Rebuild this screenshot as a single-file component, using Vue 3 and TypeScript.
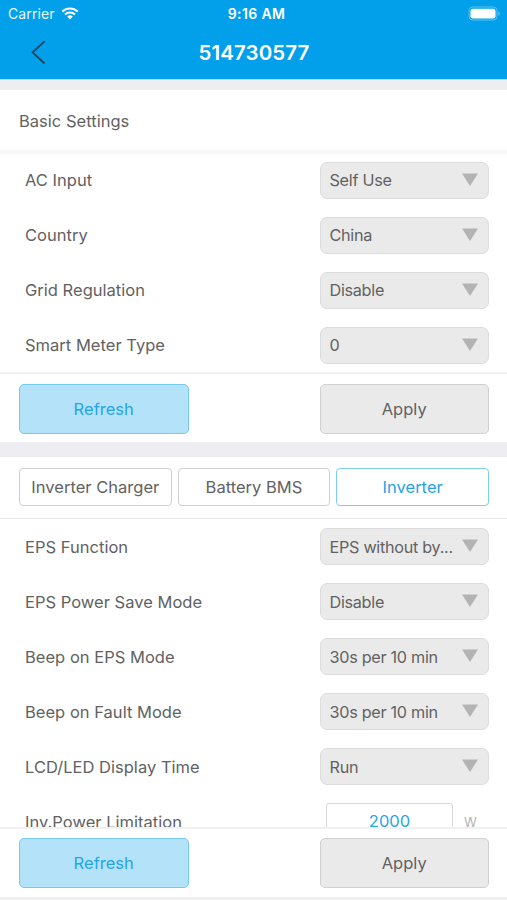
<script setup lang="ts">
import { ref } from 'vue'

interface Setting {
  label: string
  value: string
}

const basicSettings: Setting[] = [
  { label: 'AC Input', value: 'Self Use' },
  { label: 'Country', value: 'China' },
  { label: 'Grid Regulation', value: 'Disable' },
  { label: 'Smart Meter Type', value: '0' },
]

const inverterSettings: Setting[] = [
  { label: 'EPS Function', value: 'EPS without by...' },
  { label: 'EPS Power Save Mode', value: 'Disable' },
  { label: 'Beep on EPS Mode', value: '30s per 10 min' },
  { label: 'Beep on Fault Mode', value: '30s per 10 min' },
  { label: 'LCD/LED Display Time', value: 'Run' },
]

const tabs = ['Inverter Charger', 'Battery BMS', 'Inverter']
const activeTab = ref('Inverter')
const powerLimit = ref('2000')
</script>

<template>
  <main class="screen">
    <header class="header">
      <div class="status">
        <div class="carrier">
          <span>Carrier</span>
          <svg class="wifi" width="18" height="13" viewBox="0 0 18 13">
            <path d="M1.3 4.6a11 11 0 0 1 15.4 0" fill="none" stroke="#fff" stroke-width="2.1" />
            <path d="M4 7.5a7.2 7.2 0 0 1 10 0" fill="none" stroke="#fff" stroke-width="2.1" />
            <path d="M9 12.4 6.2 9.6a4 4 0 0 1 5.6 0z" fill="#fff" />
          </svg>
        </div>
        <span class="time">9:16 AM</span>
        <svg class="battery" width="33" height="15" viewBox="0 0 33 15">
          <rect x="1" y="1" width="28" height="13" rx="3.8" fill="none" stroke="#5cc1f2" stroke-width="1" />
          <rect x="2.5" y="2.7" width="25" height="9.8" rx="2.2" fill="#fff" />
          <path d="M30.3 5.2v4.6a2.5 2.5 0 0 0 0-4.6z" fill="#5cc1f2" />
        </svg>
      </div>
      <div class="navbar">
        <button class="back" aria-label="Back">
          <svg width="15" height="25" viewBox="0 0 15 25">
            <path d="M13.5 1.3 1.6 12.3l11.9 11.2" fill="none" stroke="#17455c" stroke-width="1.8" />
          </svg>
        </button>
        <h1>514730577</h1>
      </div>
    </header>

    <section class="basic">
      <h2>Basic Settings</h2>
      <div class="rows">
        <div v-for="s in basicSettings" :key="s.label" class="row">
          <span class="label">{{ s.label }}</span>
          <button class="select">
            <span>{{ s.value }}</span>
            <svg width="16" height="13" viewBox="0 0 16 13"><path d="M0 0.5h16L8 13z" fill="#b3b3b3" /></svg>
          </button>
        </div>
      </div>
      <div class="actions">
        <button class="btn refresh">Refresh</button>
        <button class="btn">Apply</button>
      </div>
    </section>

    <section class="device">
      <nav class="tabs">
        <button
          v-for="t in tabs"
          :key="t"
          class="tab"
          :class="{ active: t === activeTab }"
          @click="activeTab = t"
        >{{ t }}</button>
      </nav>
      <div class="rows scroll">
        <div v-for="s in inverterSettings" :key="s.label" class="row">
          <span class="label">{{ s.label }}</span>
          <button class="select">
            <span>{{ s.value }}</span>
            <svg width="16" height="13" viewBox="0 0 16 13"><path d="M0 0.5h16L8 13z" fill="#b3b3b3" /></svg>
          </button>
        </div>
        <div class="row">
          <span class="label">Inv.Power Limitation</span>
          <div class="limit">
            <input v-model="powerLimit" aria-label="Inv.Power Limitation" />
            <span class="unit">W</span>
          </div>
        </div>
      </div>
      <div class="actions bottom">
        <button class="btn refresh">Refresh</button>
        <button class="btn">Apply</button>
      </div>
    </section>
  </main>
</template>

<style>
body {
  margin: 0;
  overflow: hidden;
}
</style>

<style scoped>
.screen {
  display: flex;
  flex-direction: column;
  width: 507px;
  height: 900px;
  overflow: hidden;
  background: #eeedf2;
  color: #626262;
  font-family: Inter, 'Liberation Sans', sans-serif;
  font-size: 16.5px;
  letter-spacing: 0.02px;
}
.screen * {
  box-sizing: border-box;
}
button,
input {
  margin: 0;
  padding: 0;
  font: inherit;
  letter-spacing: inherit;
  color: inherit;
  border: 0;
  background: none;
}
.header {
  height: 80px;
  flex: none;
  background: #02a0ea;
  border-bottom: 1px solid #a5e2f9;
  color: #fff;
}
.status {
  display: grid;
  grid-template-columns: 1fr auto 1fr;
  align-items: center;
  height: 27px;
  padding: 0 5px 0 8px;
  font-size: 14px;
  letter-spacing: 0.1px;
}
.carrier {
  display: flex;
  align-items: center;
  gap: 6px;
  color: #e6f7ff;
}
.time {
  font-weight: 600;
  font-size: 14px;
  letter-spacing: 0.35px;
  padding-left: 3px;
}
.battery {
  justify-self: end;
  margin-right: 1px;
}
.navbar {
  display: grid;
  grid-template-columns: 60px 1fr 60px;
  align-items: center;
  height: 50px;
}
.back {
  display: flex;
  padding-left: 31px;
}
h1 {
  margin: 0;
  padding: 0 0 0 1px;
  text-align: center;
  font-size: 20.5px;
  font-weight: 600;
  letter-spacing: 0.1px;
}
.basic {
  flex: none;
  height: 352px;
  margin-top: 10px;
  background: #fff;
}
h2 {
  display: flex;
  align-items: center;
  height: 64px;
  margin: 0;
  padding: 2px 19px 0;
  border-bottom: 4px solid #f8f8f8;
  font-size: 16.5px;
  font-weight: 400;
}
.rows {
  padding: 0 18px 0 25px;
}
.basic .rows {
  height: 218px;
  overflow: hidden;
}
.row {
  display: flex;
  align-items: center;
  justify-content: space-between;
  height: 55px;
}
.basic .row:first-child {
  height: 54px;
  padding-bottom: 1px;
}
.basic .label,
.basic .select span {
  padding-bottom: 2px;
}
.select {
  display: flex;
  align-items: center;
  justify-content: space-between;
  width: 169.5px;
  height: 37px;
  padding: 0 10.5px 0 9px;
  border: 1px solid #dcdcdc;
  border-radius: 7px;
  background: #eaeaea;
  font-size: 16.2px;
  letter-spacing: -0.28px;
}
.select svg {
  margin-bottom: 3px;
}
.actions {
  display: flex;
  justify-content: space-between;
  padding: 10px 18px 0 19px;
  border-top: 2px solid #f1f1f3;
}
.btn {
  width: 169.5px;
  height: 49.5px;
  border: 1px solid #cfcfcf;
  border-radius: 5px;
  background: #eaeaea;
}
.btn.refresh {
  border-color: #76c9ef;
  background: #b3e2f9;
  color: #24a5e8;
}
.device {
  display: flex;
  flex: 1;
  flex-direction: column;
  min-height: 0;
  margin-top: 15px;
  border-bottom: 3px solid #f0f0f0;
  background: #fff;
}
.tabs {
  display: grid;
  grid-template-columns: repeat(3, 1fr);
  gap: 6px;
  flex: none;
  height: 62px;
  padding: 11px 18px 12px 19px;
  border-bottom: 1px solid #ececee;
}
.tab {
  border: 1px solid #cfcfcf;
  border-radius: 4px;
  white-space: nowrap;
}
.tab.active {
  border-color: #7bcef2;
  color: #1fa2e6;
}
.scroll {
  flex: 1;
  min-height: 0;
  overflow: hidden;
}
.limit {
  display: flex;
  align-items: center;
  width: 163px;
}
.limit input {
  width: 127px;
  height: 37px;
  margin-right: 11px;
  padding-bottom: 2px;
  border: 1px solid #d8d8d8;
  border-radius: 3px;
  color: #29a6e4;
  text-align: center;
}
.unit {
  color: #b2b2b2;
  font-size: 13px;
}
.bottom {
  flex: none;
  height: 70px;
  padding-top: 9px;
}
</style>
